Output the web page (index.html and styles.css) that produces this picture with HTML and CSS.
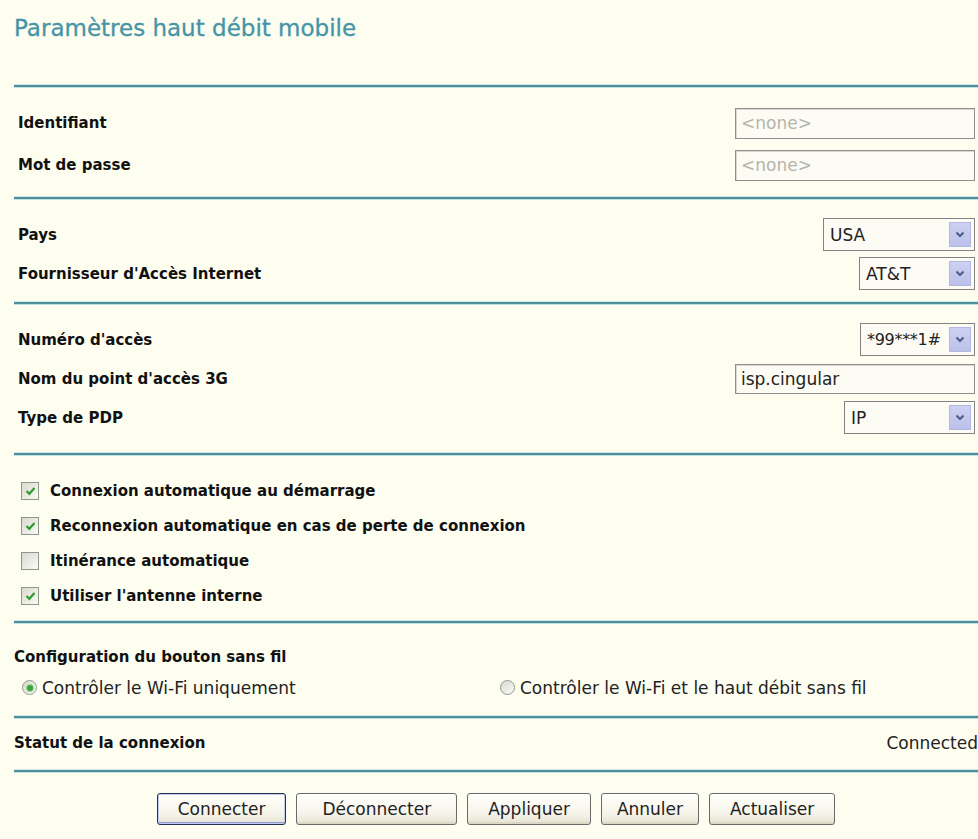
FILE: index.html
```html
<!DOCTYPE html>
<html lang="fr">
<head>
<meta charset="utf-8">
<title>Paramètres haut débit mobile</title>
<link rel="stylesheet" href="styles.css">
</head>
<body>
<div class="page">
  <h1 class="title">Paramètres haut débit mobile</h1>
  <div class="rule"></div>

  <section class="sec sec-login">
    <div class="row">
      <span class="label">Identifiant</span>
      <input class="field" type="text" placeholder="&lt;none&gt;">
    </div>
    <div class="row">
      <span class="label">Mot de passe</span>
      <input class="field" type="password" placeholder="&lt;none&gt;">
    </div>
  </section>
  <div class="rule"></div>

  <section class="sec sec-isp">
    <div class="row">
      <span class="label">Pays</span>
      <div class="select w-country"><span class="value">USA</span><span class="arrow"><svg width="10" height="7" viewBox="0 0 10 7"><path d="M1.5 1.5 L5 5 L8.5 1.5" fill="none" stroke="#4c5d8c" stroke-width="2"/></svg></span></div>
    </div>
    <div class="row">
      <span class="label">Fournisseur d'Accès Internet</span>
      <div class="select w-isp"><span class="value">AT&amp;T</span><span class="arrow"><svg width="10" height="7" viewBox="0 0 10 7"><path d="M1.5 1.5 L5 5 L8.5 1.5" fill="none" stroke="#4c5d8c" stroke-width="2"/></svg></span></div>
    </div>
  </section>
  <div class="rule"></div>

  <section class="sec sec-access">
    <div class="row">
      <span class="label">Numéro d'accès</span>
      <div class="select w-dial"><span class="value value-tight">*99***1#</span><span class="arrow"><svg width="10" height="7" viewBox="0 0 10 7"><path d="M1.5 1.5 L5 5 L8.5 1.5" fill="none" stroke="#4c5d8c" stroke-width="2"/></svg></span></div>
    </div>
    <div class="row">
      <span class="label">Nom du point d'accès 3G</span>
      <input class="field field-apn" type="text" value="isp.cingular">
    </div>
    <div class="row">
      <span class="label">Type de PDP</span>
      <div class="select w-pdp"><span class="value">IP</span><span class="arrow"><svg width="10" height="7" viewBox="0 0 10 7"><path d="M1.5 1.5 L5 5 L8.5 1.5" fill="none" stroke="#4c5d8c" stroke-width="2"/></svg></span></div>
    </div>
  </section>
  <div class="rule"></div>

  <section class="sec sec-options">
    <label class="opt"><span class="check on"><svg width="11" height="10" viewBox="0 0 11 10"><path d="M1.5 5 L4.3 7.8 L9.5 2" fill="none" stroke="#2f9b33" stroke-width="2.2"/></svg></span><span class="label">Connexion automatique au démarrage</span></label>
    <label class="opt"><span class="check on"><svg width="11" height="10" viewBox="0 0 11 10"><path d="M1.5 5 L4.3 7.8 L9.5 2" fill="none" stroke="#2f9b33" stroke-width="2.2"/></svg></span><span class="label">Reconnexion automatique en cas de perte de connexion</span></label>
    <label class="opt"><span class="check"></span><span class="label">Itinérance automatique</span></label>
    <label class="opt"><span class="check on"><svg width="11" height="10" viewBox="0 0 11 10"><path d="M1.5 5 L4.3 7.8 L9.5 2" fill="none" stroke="#2f9b33" stroke-width="2.2"/></svg></span><span class="label">Utiliser l'antenne interne</span></label>
  </section>
  <div class="rule"></div>

  <section class="sec sec-button">
    <div class="heading"><span class="label">Configuration du bouton sans fil</span></div>
    <div class="radios">
      <label class="radio-opt first"><span class="radio on"></span><span class="text">Contrôler le Wi-Fi uniquement</span></label>
      <label class="radio-opt"><span class="radio"></span><span class="text">Contrôler le Wi-Fi et le haut débit sans fil</span></label>
    </div>
  </section>
  <div class="rule"></div>

  <section class="sec sec-status">
    <div class="status-row">
      <span class="label">Statut de la connexion</span>
      <span class="text">Connected</span>
    </div>
  </section>
  <div class="rule"></div>

  <div class="actions">
    <button class="btn btn-default" type="button">Connecter</button>
    <button class="btn btn-wide" type="button">Déconnecter</button>
    <button class="btn" type="button">Appliquer</button>
    <button class="btn btn-narrow" type="button">Annuler</button>
    <button class="btn" type="button">Actualiser</button>
  </div>
</div>
</body>
</html>
```

FILE: styles.css
```css
* { box-sizing: border-box; }

html, body {
  margin: 0;
  padding: 0;
}

body {
  background: #fdfdf0;
  font-family: "DejaVu Sans", "Liberation Sans", sans-serif;
  color: #1a1a1a;
  overflow: hidden;
}

.page {
  margin-left: 14px;
  width: 964px;
}

.title {
  margin: 0 0 43px 0;
  padding-top: 14px;
  font-size: 23px;
  line-height: 28px;
  font-weight: normal;
  color: #4595a6;
  -webkit-text-stroke: 0.3px #4595a6;
}

.rule {
  height: 2px;
  background: #4f8f9c;
  box-shadow: 0 -1px 0 #d3eaec, 0 1px 0 #bfe0e4;
}

.sec {
  display: flex;
  flex-direction: column;
}

.row {
  display: flex;
  align-items: center;
  justify-content: space-between;
  padding-left: 4px;
  padding-right: 3px;
}

.label {
  font-weight: bold;
  font-size: 15px;
  color: #111;
}

.text {
  font-size: 17px;
  color: #222;
}

/* sections */
.sec-login { padding: 15px 0 11px; }
.sec-login .row { height: 42px; }

.sec-isp { padding: 16px 0 9px; }
.sec-isp .row { height: 39px; }

.sec-access { padding: 16px 0 16px; }
.sec-access .row { height: 39px; }

.sec-options { padding: 18px 0 8px; }

.sec-button { padding: 19px 0 13px; }

.sec-status { padding: 8px 0 10px; }

/* text inputs */
.field {
  width: 240px;
  height: 31px;
  margin: 0;
  padding: 0 5px;
  font-family: inherit;
  font-size: 17px;
  color: #222;
  background: #fcfcf5;
  border: 1px solid #8f8f8f;
  box-shadow: inset 1px 1px 0 #d9d9d0;
  outline: none;
}

.field::placeholder {
  color: #b4b4ac;
}

.field-apn { height: 30px; }

/* select boxes */
.select {
  display: inline-flex;
  align-items: stretch;
  height: 33px;
  padding: 3px;
  border: 1px solid #838383;
  background: #fcfcf5;
}

.select .value {
  flex: 1;
  display: flex;
  align-items: center;
  padding-left: 3px;
  font-size: 17px;
  color: #222;
  white-space: nowrap;
  overflow: hidden;
}

.select .value-tight {
  font-size: 16px;
  letter-spacing: -0.3px;
}

.select .arrow {
  width: 22px;
  display: flex;
  align-items: center;
  justify-content: center;
  background: linear-gradient(#cdd1f3, #bcc1ea);
  border: 1px solid #b3b8e2;
}

.w-country { width: 152px; }
.w-isp { width: 116px; }
.w-dial { width: 115px; }
.w-pdp { width: 131px; }

/* checkboxes */
.opt {
  display: flex;
  align-items: center;
  height: 35px;
}

.check {
  width: 18px;
  height: 18px;
  margin-left: 7px;
  margin-right: 11px;
  display: inline-flex;
  align-items: center;
  justify-content: center;
  border: 1px solid #8c9a8c;
  background: linear-gradient(135deg, #d8d9ce, #fbfbf6);
}

/* radios */
.heading {
  display: flex;
  align-items: center;
  height: 30px;
}

.radios {
  display: grid;
  grid-template-columns: 486px 1fr;
  height: 31px;
  align-items: center;
}

.radio-opt {
  display: flex;
  align-items: center;
}

.radio-opt.first {
  padding-left: 8px;
}

.radio {
  width: 15px;
  height: 15px;
  margin-right: 5px;
  border-radius: 50%;
  border: 1px solid #8c9a8c;
  background: linear-gradient(135deg, #d8d9ce, #fbfbf6);
  display: inline-flex;
  align-items: center;
  justify-content: center;
}

.radio.on::after {
  content: "";
  width: 6px;
  height: 6px;
  border-radius: 50%;
  background: #3aa53c;
  box-shadow: 0 0 1px 1px #9ed49e;
}

/* status */
.status-row {
  display: flex;
  align-items: center;
  justify-content: space-between;
  height: 34px;
}

/* buttons */
.actions {
  display: flex;
  justify-content: center;
  gap: 10px;
  padding-top: 21px;
}

.btn {
  height: 32px;
  margin: 0;
  padding: 0 20px;
  font-family: inherit;
  font-size: 17px;
  color: #222;
  background: linear-gradient(#fffffb, #f6f4ea 65%, #e5e2d1);
  border: 1px solid #6a6a6a;
  border-radius: 3px;
  box-shadow: inset 0 -2px 0 #dad7c4;
}

.btn-wide { padding: 0 25px; }
.btn-narrow { padding: 0 15px; }

.btn-default {
  border-color: #233050;
  box-shadow: inset 0 0 0 1px #c3cbee, inset 0 -2px 0 #8f9bd8;
}
```
